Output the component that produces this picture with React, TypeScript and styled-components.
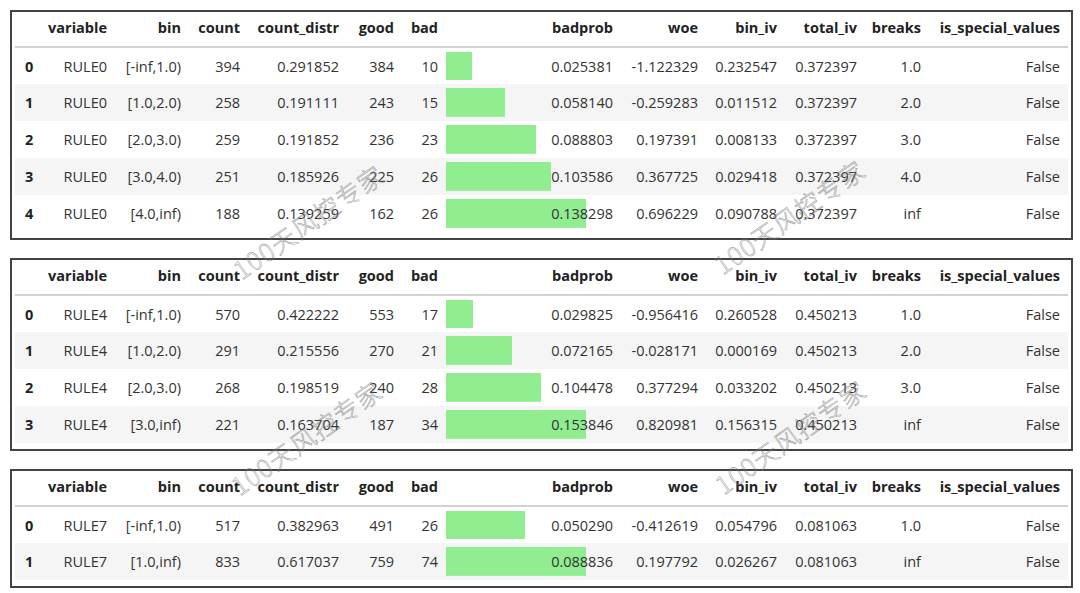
import React from "react";
import styled, { createGlobalStyle } from "styled-components";

const GlobalStyle = createGlobalStyle`
  html, body { margin: 0; padding: 0; background: #ffffff; }
  body { font-family: "Open Sans", "Noto Sans", sans-serif; }
`;

type Row = {
  bin: string;
  count: number;
  distr: string;
  good: number;
  bad: number;
  badprob: string;
  woe: string;
  binIv: string;
  breaks: string;
};

type TableData = { variable: string; totalIv: string; rows: Row[] };

const r = (
  bin: string,
  count: number,
  distr: string,
  good: number,
  bad: number,
  badprob: string,
  woe: string,
  binIv: string,
  breaks: string
): Row => ({ bin, count, distr, good, bad, badprob, woe, binIv, breaks });

const TABLES: TableData[] = [
  {
    variable: "RULE0",
    totalIv: "0.372397",
    rows: [
      r("[-inf,1.0)", 394, "0.291852", 384, 10, "0.025381", "-1.122329", "0.232547", "1.0"),
      r("[1.0,2.0)", 258, "0.191111", 243, 15, "0.058140", "-0.259283", "0.011512", "2.0"),
      r("[2.0,3.0)", 259, "0.191852", 236, 23, "0.088803", "0.197391", "0.008133", "3.0"),
      r("[3.0,4.0)", 251, "0.185926", 225, 26, "0.103586", "0.367725", "0.029418", "4.0"),
      r("[4.0,inf)", 188, "0.139259", 162, 26, "0.138298", "0.696229", "0.090788", "inf"),
    ],
  },
  {
    variable: "RULE4",
    totalIv: "0.450213",
    rows: [
      r("[-inf,1.0)", 570, "0.422222", 553, 17, "0.029825", "-0.956416", "0.260528", "1.0"),
      r("[1.0,2.0)", 291, "0.215556", 270, 21, "0.072165", "-0.028171", "0.000169", "2.0"),
      r("[2.0,3.0)", 268, "0.198519", 240, 28, "0.104478", "0.377294", "0.033202", "3.0"),
      r("[3.0,inf)", 221, "0.163704", 187, 34, "0.153846", "0.820981", "0.156315", "inf"),
    ],
  },
  {
    variable: "RULE7",
    totalIv: "0.081063",
    rows: [
      r("[-inf,1.0)", 517, "0.382963", 491, 26, "0.050290", "-0.412619", "0.054796", "1.0"),
      r("[1.0,inf)", 833, "0.617037", 759, 74, "0.088836", "0.197792", "0.026267", "inf"),
    ],
  },
];

const COLS: { key: string; label: string; width: number }[] = [
  { key: "idx", label: "", width: 26 },
  { key: "variable", label: "variable", width: 74 },
  { key: "bin", label: "bin", width: 74 },
  { key: "count", label: "count", width: 59 },
  { key: "distr", label: "count_distr", width: 99 },
  { key: "good", label: "good", width: 55 },
  { key: "bad", label: "bad", width: 44 },
  { key: "badprob", label: "badprob", width: 175 },
  { key: "woe", label: "woe", width: 85 },
  { key: "binIv", label: "bin_iv", width: 79 },
  { key: "totalIv", label: "total_iv", width: 80 },
  { key: "breaks", label: "breaks", width: 64 },
  { key: "special", label: "is_special_values", width: 139 },
];

const Page = styled.div`
  position: relative;
  width: 1080px;
  height: 593px;
  overflow: hidden;
  padding: 10px 0 0 10px;
  box-sizing: border-box;
  display: flex;
  flex-direction: column;
  gap: 18px;
`;

const Frame = styled.div`
  width: 1063px;
  box-sizing: border-box;
  border: 2px solid #434343;
  padding: 2px 3px 6px 3px;
`;

const Table = styled.table`
  width: 1053px;
  table-layout: fixed;
  border-collapse: collapse;
  font-size: 14.5px;
  color: #333333;
`;

const Col = styled.col<{ $w: number }>`
  width: ${(p) => p.$w}px;
`;

const HeadCell = styled.th`
  height: 33px;
  box-sizing: border-box;
  padding: 0 8px 5px 0;
  text-align: right;
  font-weight: 700;
  color: #222222;
  white-space: nowrap;
  border-bottom: 2px solid #d2d2d2;
`;

const BodyRow = styled.tr<{ $striped: boolean }>`
  height: 37px;
  background: ${(p) => (p.$striped ? "#f5f5f5" : "#ffffff")};
`;

const Cell = styled.td`
  padding: 0 8px 0 0;
  text-align: right;
  white-space: nowrap;
`;

const IndexCell = styled.th`
  padding: 0 0 0 10px;
  text-align: left;
  font-weight: 700;
  color: #222222;
`;

const BarCell = styled.td`
  padding: 0 8px 0 0;
  text-align: right;
  white-space: nowrap;
  background-repeat: no-repeat;
  background-position: left center;
  background-size: 100% 78%;
`;

const Watermark = styled.div<{ $x: number; $y: number }>`
  position: absolute;
  left: ${(p) => p.$x}px;
  top: ${(p) => p.$y}px;
  transform: translate(-50%, -50%) rotate(-35deg);
  font-family: "Noto Sans CJK SC", "Noto Sans", sans-serif;
  font-size: 25px;
  font-weight: 300;
  letter-spacing: 1.5px;
  color: transparent;
  -webkit-text-stroke: 0.6px rgba(120, 120, 120, 0.7);
  white-space: nowrap;
  pointer-events: none;
`;

const MARKS = [
  { x: 308, y: 221 },
  { x: 789, y: 216 },
  { x: 306, y: 437 },
  { x: 790, y: 436 },
];

function DataTable({ data }: { data: TableData }) {
  const max = Math.max(...data.rows.map((row) => parseFloat(row.badprob)));
  return (
    <Frame>
      <Table>
        <colgroup>
          {COLS.map((c) => (
            <Col key={c.key} $w={c.width} />
          ))}
        </colgroup>
        <thead>
          <tr>
            {COLS.map((c) => (
              <HeadCell key={c.key}>{c.label}</HeadCell>
            ))}
          </tr>
        </thead>
        <tbody>
          {data.rows.map((row, i) => {
            const pct = (parseFloat(row.badprob) / max) * 80;
            return (
              <BodyRow key={i} $striped={i % 2 === 1}>
                <IndexCell>{i}</IndexCell>
                <Cell>{data.variable}</Cell>
                <Cell>{row.bin}</Cell>
                <Cell>{row.count}</Cell>
                <Cell>{row.distr}</Cell>
                <Cell>{row.good}</Cell>
                <Cell>{row.bad}</Cell>
                <BarCell
                  style={{
                    backgroundImage: `linear-gradient(90deg, #90ee90 ${pct}%, transparent ${pct}%)`,
                  }}
                >
                  {row.badprob}
                </BarCell>
                <Cell>{row.woe}</Cell>
                <Cell>{row.binIv}</Cell>
                <Cell>{data.totalIv}</Cell>
                <Cell>{row.breaks}</Cell>
                <Cell>False</Cell>
              </BodyRow>
            );
          })}
        </tbody>
      </Table>
    </Frame>
  );
}

export default function App() {
  return (
    <>
      <GlobalStyle />
      <Page>
        {TABLES.map((t) => (
          <DataTable key={t.variable} data={t} />
        ))}
        {MARKS.map((m, i) => (
          <Watermark key={i} $x={m.x} $y={m.y}>
            100天风控专家
          </Watermark>
        ))}
      </Page>
    </>
  );
}
